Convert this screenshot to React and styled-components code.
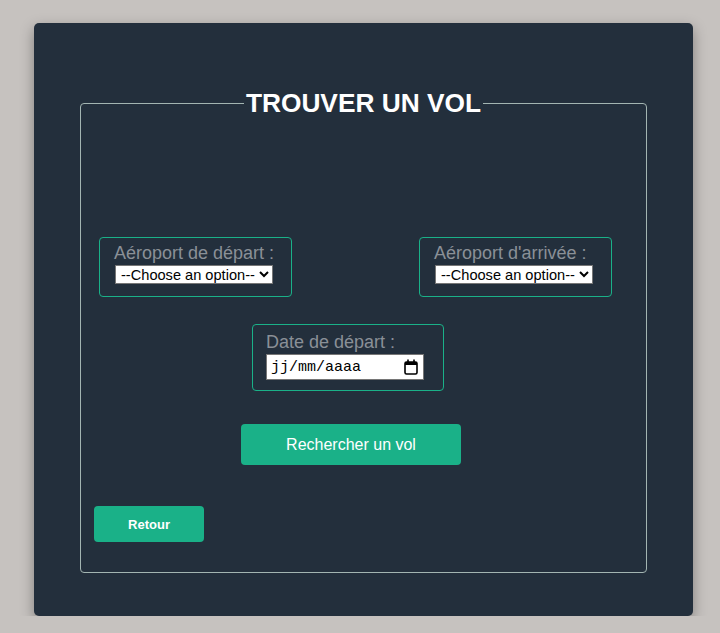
import React from "react";
import styled, { createGlobalStyle } from "styled-components";

const GlobalStyle = createGlobalStyle`
  body {
    margin: 0;
    background: #c6c2bf;
    font-family: "Liberation Sans", Arial, sans-serif;
  }
`;

const Card = styled.div`
  box-sizing: border-box;
  width: 659px;
  height: 593px;
  margin: 23px 0 0 34px;
  padding: 67px 46px 0 46px;
  background: #232f3c;
  border-radius: 5px;
  box-shadow: 0 5px 14px rgba(0, 0, 0, 0.35);
`;

const Frame = styled.fieldset`
  box-sizing: border-box;
  margin: 0;
  padding: 0 0 30px 0;
  width: 567px;
  border: 1px solid #a3b5b2;
  border-radius: 4px;
`;

const Title = styled.legend`
  margin: 0 auto;
  padding: 0 2px;
  color: #ffffff;
  font-size: 26.3px;
  font-weight: bold;
  line-height: 27px;
`;

const Row = styled.div`
  display: flex;
  justify-content: space-between;
  margin-top: 120px;
  padding: 0 34px 0 18px;
`;

const Group = styled.fieldset`
  box-sizing: border-box;
  margin: ${(p) => (p.$center ? "27px 0 0 171px" : "0")};
  padding: ${(p) => (p.$center ? "7px 18px 10px 13px" : "5px 17px 12px 14px")};
  width: ${(p) => (p.$center ? "192px" : "193px")};
  border: 1px solid #1ab188;
  border-radius: 4px;
`;

const Label = styled.label`
  display: block;
  color: #8a9097;
  font-size: 18px;
  line-height: 21px;
  white-space: nowrap;
`;

const Select = styled.select`
  display: block;
  box-sizing: border-box;
  margin: 1px 0 0 1px;
  width: 158px;
  height: 19px;
  padding: 0 0 0 1px;
  font-family: "Liberation Sans", Arial, sans-serif;
  font-size: 14.6px;
  color: #000;
  background: #fff;
  border: 1px solid #767676;
  border-radius: 0;
`;

const DateBox = styled.div`
  display: flex;
  align-items: center;
  box-sizing: border-box;
  margin-top: 1px;
  width: 158px;
  height: 26px;
  padding: 0 5px 0 4px;
  background: #fff;
  border: 1px solid #767676;
`;

const DateText = styled.input`
  flex: 1;
  min-width: 0;
  padding: 0;
  border: none;
  outline: none;
  background: transparent;
  font-family: "Liberation Mono", "DejaVu Sans Mono", monospace;
  font-size: 15px;
  color: #000;

  &::placeholder {
    color: #000;
    opacity: 1;
  }
`;

const CalendarIcon = () => (
  <svg width="14" height="16" viewBox="0 0 14 16" aria-hidden="true">
    <rect x="1" y="3" width="12" height="12" rx="1.5" fill="none" stroke="#000" strokeWidth="1.6" />
    <rect x="1" y="3" width="12" height="3" fill="#000" />
    <rect x="3.2" y="0.5" width="1.6" height="3" fill="#000" />
    <rect x="9.2" y="0.5" width="1.6" height="3" fill="#000" />
  </svg>
);

const Button = styled.button`
  display: block;
  box-sizing: border-box;
  border: none;
  border-radius: 4px;
  background: #1ab188;
  color: #ffffff;
  font-family: "Liberation Sans", Arial, sans-serif;
  cursor: pointer;
  margin: ${(p) => (p.$small ? "41px 0 0 13px" : "33px 0 0 160px")};
  width: ${(p) => (p.$small ? "110px" : "220px")};
  height: ${(p) => (p.$small ? "36px" : "41px")};
  font-size: ${(p) => (p.$small ? "13px" : "16px")};
  font-weight: ${(p) => (p.$small ? "bold" : "normal")};
`;

const App = () => {
  const options = (
    <>
      <option value="">--Choose an option--</option>
      <option value="CDG">Paris CDG</option>
      <option value="ORY">Paris Orly</option>
      <option value="LYS">Lyon</option>
    </>
  );

  return (
    <>
      <GlobalStyle />
      <Card>
        <Frame>
          <Title>TROUVER UN VOL</Title>
          <Row>
            <Group>
              <Label htmlFor="depart">Aéroport de départ :</Label>
              <Select id="depart" defaultValue="">
                {options}
              </Select>
            </Group>
            <Group>
              <Label htmlFor="arrivee">Aéroport d'arrivée :</Label>
              <Select id="arrivee" defaultValue="">
                {options}
              </Select>
            </Group>
          </Row>
          <Group $center>
            <Label htmlFor="date">Date de départ :</Label>
            <DateBox>
              <DateText id="date" type="text" placeholder="jj/mm/aaaa" />
              <CalendarIcon />
            </DateBox>
          </Group>
          <Button>Rechercher un vol</Button>
          <Button $small>Retour</Button>
        </Frame>
      </Card>
    </>
  );
};

export default App;
